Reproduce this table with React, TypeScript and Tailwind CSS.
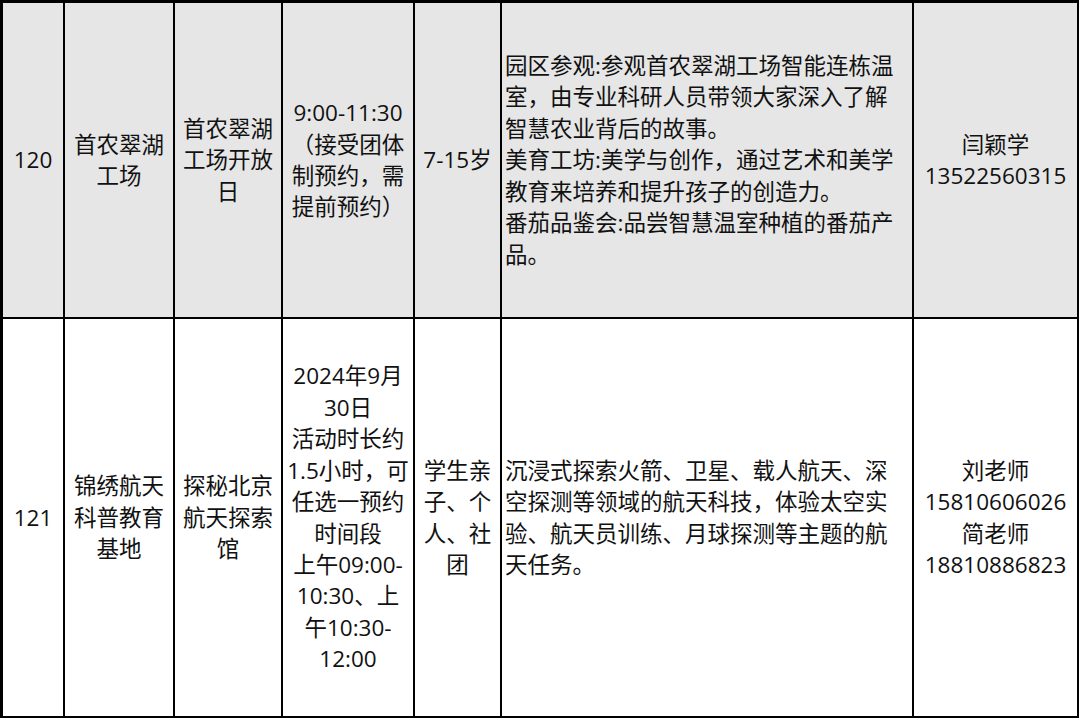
import React from "react";

const Lines = ({ lines }: { lines: string[] }) => (
  <>
    {lines.map((l, i) => (
      <div key={i} className="whitespace-nowrap">
        {l}
      </div>
    ))}
  </>
);

const Cell = ({
  lines,
  gray,
  left,
}: {
  lines: string[];
  gray?: boolean;
  left?: boolean;
}) => (
  <div
    className={`flex flex-col justify-center ${
      left ? "items-start text-left pl-[3px]" : "items-center text-center"
    } ${gray ? "bg-[#e6e6e6]" : "bg-white"}`}
  >
    <Lines lines={lines} />
  </div>
);

export default function App() {
  const row1: { lines: string[]; left?: boolean }[] = [
    { lines: ["120"] },
    { lines: ["首农翠湖", "工场"] },
    { lines: ["首农翠湖", "工场开放", "日"] },
    { lines: ["9:00-11:30", "（接受团体", "制预约，需", "提前预约）"] },
    { lines: ["7-15岁"] },
    {
      left: true,
      lines: [
        "园区参观:参观首农翠湖工场智能连栋温",
        "室，由专业科研人员带领大家深入了解",
        "智慧农业背后的故事。",
        "美育工坊:美学与创作，通过艺术和美学",
        "教育来培养和提升孩子的创造力。",
        "番茄品鉴会:品尝智慧温室种植的番茄产",
        "品。",
      ],
    },
    { lines: ["闫颖学", "13522560315"] },
  ];
  const row2: { lines: string[]; left?: boolean }[] = [
    { lines: ["121"] },
    { lines: ["锦绣航天", "科普教育", "基地"] },
    { lines: ["探秘北京", "航天探索", "馆"] },
    {
      lines: [
        "2024年9月",
        "30日",
        "活动时长约",
        "1.5小时，可",
        "任选一预约",
        "时间段",
        "上午09:00-",
        "10:30、上",
        "午10:30-",
        "12:00",
      ],
    },
    { lines: ["学生亲", "子、个", "人、社", "团"] },
    {
      left: true,
      lines: [
        "沉浸式探索火箭、卫星、载人航天、深",
        "空探测等领域的航天科技，体验太空实",
        "验、航天员训练、月球探测等主题的航",
        "天任务。",
      ],
    },
    { lines: ["刘老师", "15810606026", "简老师", "18810886823"] },
  ];

  return (
    <div className="w-[1080px] h-[720px] bg-white overflow-hidden">
      <div className="w-[1079px] h-[718px] bg-black pl-[3px] pt-[3px] pr-[2px] pb-[2px] grid grid-cols-[60px_108px_106px_130px_85px_410px_163px] grid-rows-[314px_397px] gap-[2px] font-['Open_Sans','Noto_Sans_CJK_SC',sans-serif] text-[22.5px] leading-[31.4px] text-[#111] [text-spacing-trim:space-all]">
        {row1.map((c, i) => (
          <Cell key={"a" + i} lines={c.lines} left={c.left} gray />
        ))}
        {row2.map((c, i) => (
          <Cell key={"b" + i} lines={c.lines} left={c.left} />
        ))}
      </div>
    </div>
  );
}
